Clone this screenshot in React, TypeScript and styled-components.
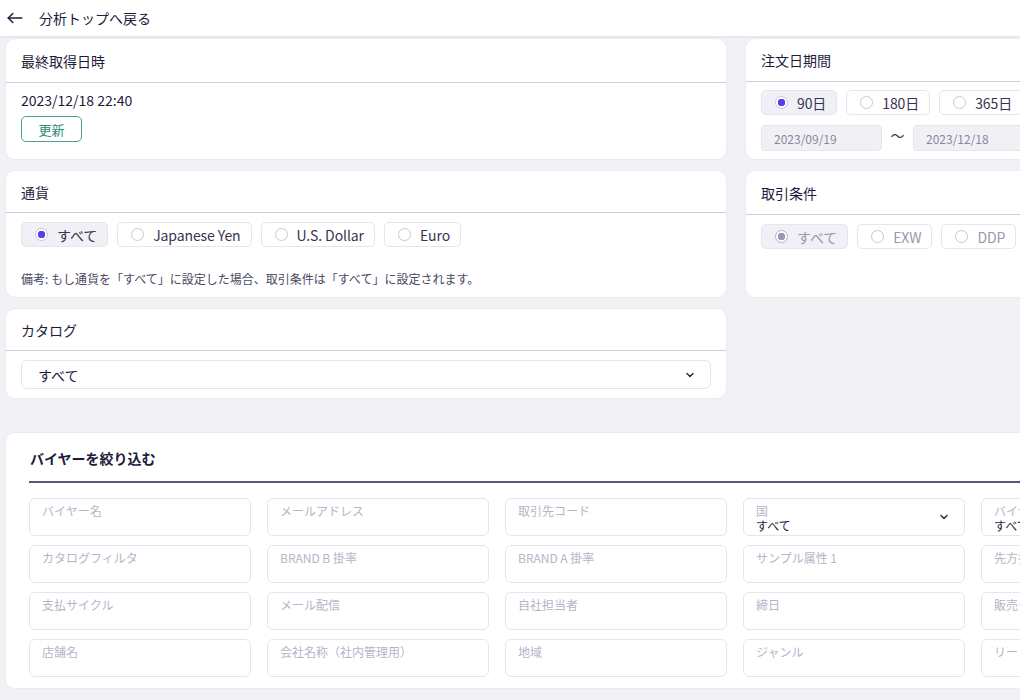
import React from 'react';
import styled, {createGlobalStyle} from 'styled-components';

const GlobalStyle = createGlobalStyle`
  html, body { margin: 0; padding: 0; }
  body {
    background: #f2f1f6;
    font-family: "Noto Sans CJK JP", "Noto Sans", sans-serif;
    color: #1e1c3a;
    overflow: hidden;
  }
`;

const FIELDS: Array<{label: string, value?: string}> = [
  {label: 'バイヤー名'},
  {label: 'メールアドレス'},
  {label: '取引先コード'},
  {label: '国', value: 'すべて'},
  {label: 'バイヤー種別', value: 'すべて'},
  {label: 'カタログフィルタ'},
  {label: 'BRAND B 掛率'},
  {label: 'BRAND A 掛率'},
  {label: 'サンプル属性 1'},
  {label: '先方担当者'},
  {label: '支払サイクル'},
  {label: 'メール配信'},
  {label: '自社担当者'},
  {label: '締日'},
  {label: '販売チャネル'},
  {label: '店舗名'},
  {label: '会社名称（社内管理用）'},
  {label: '地域'},
  {label: 'ジャンル'},
  {label: 'リード元'},
];

function Chevron() {
  return (
    <svg width="12" height="12" viewBox="0 0 24 24" fill="none" stroke="#1e1c3a" strokeWidth="2.6" strokeLinecap="round" strokeLinejoin="round">
      <path d="M6 9l6 6 6-6" />
    </svg>
  );
}

function RadioPill(p: {label: string, checked?: boolean, disabled?: boolean}) {
  return (
    <Pill $checked={p.checked} $disabled={p.disabled}>
      <Circle $checked={p.checked} $disabled={p.disabled} />
      {p.label}
    </Pill>
  );
}

export default function App() {
  return (
    <>
      <GlobalStyle />
      <Header>
        <svg width="18" height="18" viewBox="0 0 24 24" fill="none" stroke="#1e1c3a" strokeWidth="2" strokeLinecap="round" strokeLinejoin="round">
          <path d="M21 12H3" />
          <path d="M9 6l-6 6 6 6" />
        </svg>
        <span>分析トップへ戻る</span>
      </Header>

      <Main>
        <TopGrid>
          <Card>
            <CardTitle>最終取得日時</CardTitle>
            <CardBody>
              <DateText>2023/12/18 22:40</DateText>
              <RefreshButton>更新</RefreshButton>
            </CardBody>
          </Card>

          <Card>
            <CardTitle>注文日期間</CardTitle>
            <CardBody $gap={10} $pad="8px 15px">
              <PillRow>
                <RadioPill label="90日" checked />
                <RadioPill label="180日" />
                <RadioPill label="365日" />
              </PillRow>
              <RangeRow>
                <DateBox>2023/09/19</DateBox>
                <Tilde>〜</Tilde>
                <DateBox>2023/12/18</DateBox>
              </RangeRow>
            </CardBody>
          </Card>

          <Card>
            <CardTitle>通貨</CardTitle>
            <CardBody $gap={23} $pad="9px 15px 10px">
              <PillRow>
                <RadioPill label="すべて" checked />
                <RadioPill label="Japanese Yen" />
                <RadioPill label="U.S. Dollar" />
                <RadioPill label="Euro" />
              </PillRow>
              <Note>備考: もし通貨を「すべて」に設定した場合、取引条件は「すべて」に設定されます。</Note>
            </CardBody>
          </Card>

          <Card>
            <CardTitle>取引条件</CardTitle>
            <CardBody $pad="9px 15px">
              <PillRow>
                <RadioPill label="すべて" checked disabled />
                <RadioPill label="EXW" disabled />
                <RadioPill label="DDP" disabled />
              </PillRow>
            </CardBody>
          </Card>

          <Card>
            <CardTitle>カタログ</CardTitle>
            <CardBody $pad="9px 15px">
              <Select>
                <span>すべて</span>
                <Chevron />
              </Select>
            </CardBody>
          </Card>
        </TopGrid>

        <FilterCard>
          <FilterTitle>バイヤーを絞り込む</FilterTitle>
          <FieldGrid>
            {FIELDS.map((f, i) => (
              <Field key={i}>
                <FieldText>
                  <FieldLabel>{f.label}</FieldLabel>
                  {f.value ? <FieldValue>{f.value}</FieldValue> : null}
                </FieldText>
                {f.value ? <Chevron /> : null}
              </Field>
            ))}
          </FieldGrid>
        </FilterCard>
      </Main>
    </>
  );
}

const Header = styled.div`
  height: 36px;
  background: #fff;
  display: flex;
  align-items: center;
  gap: 15px;
  padding-left: 6px;
  font-size: 14px;
  box-shadow: 0 1px 2px rgba(120, 110, 180, 0.15);
`;

const Main = styled.div`
  width: 1300px;
  padding: 2px 0 0 5px;
  display: flex;
  flex-direction: column;
  gap: 33px;
`;

const TopGrid = styled.div`
  display: grid;
  grid-template-columns: 722px 480px;
  grid-template-rows: 122px 128px 91px;
  column-gap: 18px;
  row-gap: 10px;
`;

const Card = styled.div`
  background: #fff;
  border-radius: 10px;
  border: 1px solid #ebeaf1;
  box-sizing: border-box;
  display: flex;
  flex-direction: column;
`;

const CardTitle = styled.div`
  height: 43px;
  display: flex;
  align-items: center;
  padding: 0 15px;
  font-size: 14px;
  border-bottom: 1px solid #cfccdc;
`;

const CardBody = styled.div<{$gap?: number, $pad?: string}>`
  display: flex;
  flex-direction: column;
  align-items: flex-start;
  gap: ${p => p.$gap ?? 7}px;
  padding: ${p => p.$pad ?? '8px 15px'};
`;

const DateText = styled.div`
  font-size: 14px;
  line-height: 18px;
`;

const RefreshButton = styled.button`
  width: 61px;
  height: 26px;
  border: 1px solid #4a9f90;
  border-radius: 5px;
  background: #fff;
  color: #2f8a7a;
  font-family: inherit;
  font-size: 13px;
  padding: 0;
`;

const PillRow = styled.div`
  display: flex;
  gap: 9px;
`;

const Pill = styled.div<{$checked?: boolean, $disabled?: boolean}>`
  height: 25px;
  box-sizing: border-box;
  display: flex;
  align-items: center;
  gap: 9px;
  padding: 0 10px 0 13px;
  border: 1px solid #e6e5ee;
  border-radius: 5px;
  background: ${p => p.$checked ? '#f1f0f6' : '#fff'};
  font-size: 14px;
  letter-spacing: -0.1px;
  white-space: nowrap;
  color: ${p => p.$disabled ? '#9a97ae' : '#37344f'};
`;

const Circle = styled.span<{$checked?: boolean, $disabled?: boolean}>`
  width: 13px;
  height: 13px;
  box-sizing: border-box;
  border-radius: 50%;
  border: 1px solid ${p => p.$checked ? (p.$disabled ? '#b3b0c4' : '#c9c5e6') : '#c8c6d4'};
  background: ${p => p.$checked
    ? `radial-gradient(circle, ${p.$disabled ? '#9b97b1' : '#5b3fe6'} 0 3.5px, #fff 4px)`
    : '#fff'};
`;

const RangeRow = styled.div`
  display: flex;
  align-items: center;
`;

const DateBox = styled.div`
  width: 121px;
  height: 26px;
  box-sizing: border-box;
  background: #f1f0f5;
  border: 1px solid #e6e5ee;
  border-radius: 4px;
  display: flex;
  align-items: center;
  padding-left: 12px;
  font-size: 12px;
  color: #8a879c;
`;

const Tilde = styled.span`
  width: 31px;
  text-align: center;
  font-size: 14px;
  color: #37344f;
  margin-top: -6px;
`;

const Note = styled.div`
  font-size: 12px;
  color: #4a4760;
`;

const Select = styled.div`
  align-self: stretch;
  height: 29px;
  box-sizing: border-box;
  border: 1px solid #e6e5ee;
  border-radius: 6px;
  display: flex;
  align-items: center;
  justify-content: space-between;
  padding: 0 14px 0 16px;
  font-size: 14px;
`;

const FilterCard = styled.div`
  background: #fff;
  border-radius: 10px;
  border: 1px solid #ebeaf1;
  height: 257px;
  box-sizing: border-box;
  padding: 0 0 0 23px;
`;

const FilterTitle = styled.div`
  height: 47px;
  display: flex;
  align-items: center;
  padding: 0 0 0 1px;
  font-size: 14px;
  font-weight: 700;
  border-bottom: 2px solid #5a5478;
  margin-top: 1px;
`;

const FieldGrid = styled.div`
  display: grid;
  grid-template-columns: repeat(5, 222px);
  column-gap: 16px;
  row-gap: 9px;
  padding-top: 15px;
`;

const Field = styled.div`
  height: 38px;
  box-sizing: border-box;
  border: 1px solid #e6e5ee;
  border-radius: 6px;
  display: flex;
  justify-content: space-between;
  align-items: center;
  padding: 0 14px 0 12px;
`;

const FieldText = styled.div`
  align-self: flex-start;
  padding-top: 4px;
  display: flex;
  flex-direction: column;
  font-size: 12px;
  line-height: 15px;
`;

const FieldLabel = styled.span`
  color: #b6b4c8;
`;

const FieldValue = styled.span`
  color: #1e1c3a;
`;
